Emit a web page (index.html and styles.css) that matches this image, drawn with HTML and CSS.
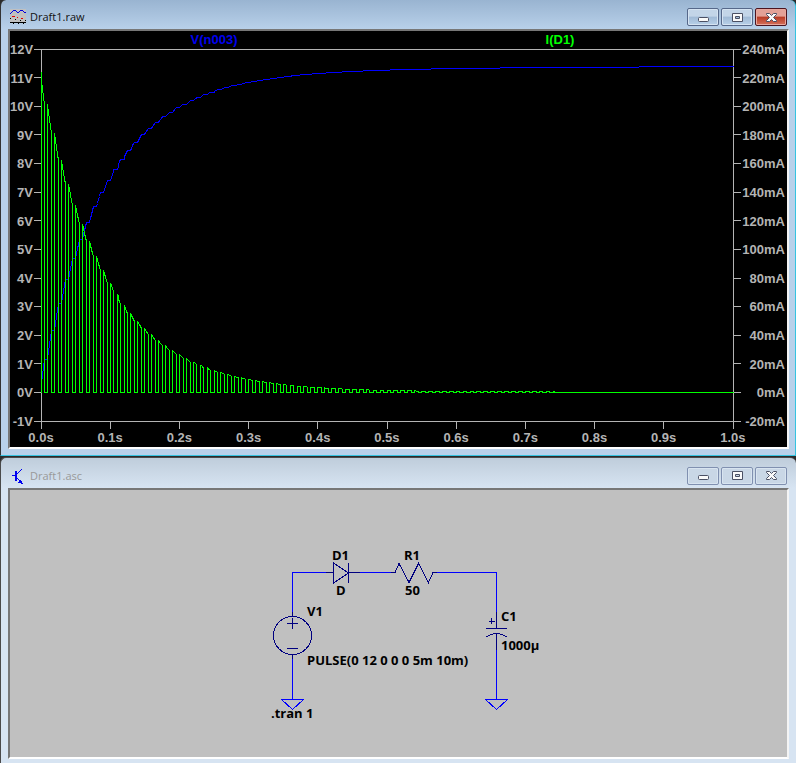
FILE: index.html
```html
<!DOCTYPE html>
<html lang="en">
<head>
<meta charset="utf-8">
<title>Draft1</title>
<link rel="stylesheet" href="styles.css">
</head>
<body>
<section class="window active" aria-label="Draft1.raw">
  <header class="titlebar">
    <svg class="app-icon" viewBox="0 0 16 16" shape-rendering="crispEdges" aria-hidden="true">
      <path fill="#c0c0c0" d="M0 0h16v13H0z"/>
      <path fill="none" stroke="#0000e0" d="M0 4.500h1M1 3.500h1M2 2.500h1M3 1.500h1M4 1.500h2M6 2.500h1M7 3.500h2M9 2.500h1M10 1.500h1M11 1.500h2M13 2.500h1M14 3.500h2"/>
      <path fill="#e00000" d="M2 7h3v1H2zM7 8h1v1H7zM11 9h2v1h-2z"/>
      <path fill="#000" d="M0 13h16v1H0zM0 9h1v1H0zM5 10h1v1H5zM10 11h1v1h-1zM15 11h1v1h-1zM3 14h1v1H3zM8 14h1v1H8zM13 14h1v1h-1z"/>
    </svg>
    <h1>Draft1.raw</h1>
    <div class="controls">
      <button type="button" aria-label="Minimize"><svg viewBox="0 0 13 11"><rect x="1.500" y="5.500" width="10" height="4" rx="1"/></svg></button>
      <button type="button" aria-label="Maximize"><svg viewBox="0 0 13 11"><path fill-rule="evenodd" d="M1.500 1.500h10v8h-10zM4.500 4.500v2h4v-2z"/></svg></button>
      <button type="button" class="close" aria-label="Close"><svg viewBox="0 0 13 11"><path d="M1.500 1.500h3l2 2 2-2h3v1l-3 3 3 3v1h-3l-2-2-2 2h-3v-1l3-3-3-3z"/></svg></button>
    </div>
  </header>
  <div class="pane graph">
    <div class="scale volts" id="volts"></div>
    <div class="legend"><span class="trace-v">V(n003)</span><span class="trace-i">I(D1)</span></div>
    <div class="scale amps" id="amps"></div>
    <svg class="plot" viewBox="0 0 708 380" preserveAspectRatio="none" shape-rendering="crispEdges" role="img" aria-label="Capacitor voltage and diode current over one second">
      <path id="axes" class="axis"/>
      <path id="voltage" class="line-v"/>
      <path id="current" class="line-i"/>
    </svg>
    <div class="seconds" id="seconds"></div>
  </div>
</section>

<section class="window inactive" aria-label="Draft1.asc">
  <header class="titlebar">
    <svg class="app-icon" viewBox="0 0 16 16" shape-rendering="crispEdges" aria-hidden="true">
      <path fill="none" stroke="#0000f0" d="M2 7.500h3M7 5.500h1M8 4.500h1M9 3.500h1M10 2.500h1M11 1.500h1M7 10.500h1M8 11.500h1"/>
      <path fill="#0000f0" d="M5 3h2v10H5zM9 12h2v1h1v2h1v1h-2v-1H8v-1h1z"/>
    </svg>
    <h1>Draft1.asc</h1>
    <div class="controls">
      <button type="button" aria-label="Minimize"><svg viewBox="0 0 13 11"><rect x="1.500" y="5.500" width="10" height="4" rx="1"/></svg></button>
      <button type="button" aria-label="Maximize"><svg viewBox="0 0 13 11"><path fill-rule="evenodd" d="M1.500 1.500h10v8h-10zM4.500 4.500v2h4v-2z"/></svg></button>
      <button type="button" aria-label="Close"><svg viewBox="0 0 13 11"><path d="M1.500 1.500h3l2 2 2-2h3v1l-3 3 3 3v1h-3l-2-2-2 2h-3v-1l3-3-3-3z"/></svg></button>
    </div>
  </header>
  <div class="pane schematic">
    <svg viewBox="254 527 289 193" role="img" aria-label="Pulse source, diode, resistor and capacitor circuit">
      <g class="wire" shape-rendering="crispEdges">
        <path d="M292.500 612V572.500H326M360 572.500h31M433 572.500h63.500V612M292.500 658v41M496.500 650v49"/>
        <path d="M281.500 699.500h22l-11 10zM485.500 699.500h22l-11 10z"/>
      </g>
      <g class="part" shape-rendering="crispEdges">
        <path d="M292.500 612v4M292.500 655v4M292.500 618v11M287 623.500h11M287 648.500h11"/>
        <circle cx="292.500" cy="635.500" r="19"/>
        <path d="M326 572.500h7M333.500 563v20l15-10zM348.500 563v20M348 572.500h12"/>
        <path d="M391 572.500h4l4-9 10 19 9.500-19 10 19 4.500-10h4"/>
        <path d="M496.500 612v16M486 628.500h21M486 637q10.500-7 21 0M496.500 634v16M489 621.500h6M491.500 618v6"/>
      </g>
      <g class="label">
        <text x="332" y="560">D1</text>
        <text x="336" y="595">D</text>
        <text x="404" y="560">R1</text>
        <text x="405" y="595">50</text>
        <text x="307" y="616">V1</text>
        <text x="307" y="665">PULSE(0 12 0 0 0 5m 10m)</text>
        <text x="501" y="621">C1</text>
        <text x="501" y="650">1000µ</text>
        <text x="271" y="718">.tran 1</text>
      </g>
    </svg>
  </div>
</section>
<script src="plot.js"></script>
</body>
</html>
```
FILE: styles.css
```css
* { box-sizing: border-box; }

body {
  margin: 0;
  min-height: 100vh;
  display: flex;
  flex-direction: column;
  background: #2b2b2b;
  font-family: "Open Sans", "Noto Sans", sans-serif;
}

.window {
  display: flex;
  flex-direction: column;
  padding: 0 7px;
}

.active {
  border-left: 1px solid #333;
  border-right: 1px solid #35c3e0;
  border-bottom: 1px solid #35c3e0;
  padding-bottom: 6px;
  padding-right: 6px;
  background: linear-gradient(#99b4d1, #b9d1ea 30px);
  border-radius: 6px 6px 0 0;
}

.inactive {
  flex: 1;
  margin-top: 1px;
  border-left: 1px solid #4a4a4a;
  border-top: 1px solid #4a4a4a;
  padding-bottom: 4px;
  background: linear-gradient(#bfcddb, #d7e4f2 30px);
  border-radius: 6px 6px 0 0;
}

.titlebar {
  display: flex;
  align-items: center;
  height: 29px;
  padding: 5px 2px 0 2px;
}

.inactive .titlebar { height: 30px; }

.app-icon { width: 16px; height: 16px; }

h1 {
  flex: 1;
  margin: 0 0 0 4px;
  font-size: 11px;
  line-height: 16px;
  font-weight: 400;
  color: #111;
}

.inactive h1 { color: #999; }

.controls { display: flex; gap: 2px; }

button {
  display: flex;
  align-items: center;
  justify-content: center;
  width: 32px;
  height: 18px;
  padding: 0;
  border: 1px solid #56688a;
  border-radius: 2px;
  background: linear-gradient(#c3d5e8 45%, #a0bad6 50%, #b8d0e8);
  box-shadow: inset 0 0 0 1px #d5e3f1;
}

button svg {
  width: 13px;
  height: 11px;
  fill: #fafafa;
  stroke: #4b5064;
}

.close {
  border-color: #4c1520;
  background: linear-gradient(#e3a197 45%, #b83a24 50%, #d4705a);
  box-shadow: inset 0 0 0 1px #e8a79d;
}

.inactive button {
  border-color: #8090b0;
  background: #c9d7e6;
  box-shadow: inset 0 0 0 1px #d8e4f0;
}

.pane {
  border: 2px solid;
  border-color: #777 #f4f4f4 #fff #777;
}

.graph {
  display: grid;
  grid-template-columns: 24px 1fr 45px;
  grid-template-rows: 18px 380px 18px;
  background: #000;
  color: #b4b4b4;
  font: bold 13px/18px "Liberation Sans", Arial, sans-serif;
}

.scale {
  grid-row: 1 / -1;
  display: flex;
  flex-direction: column;
  justify-content: space-between;
  height: 390px;
  margin-top: 10px;
  text-align: right;
}

.volts { grid-column: 1; padding-right: 1px; }
.amps { grid-column: 3; padding-right: 2px; }

.legend {
  grid-column: 2;
  display: flex;
  padding: 0 9px 0 7px;
  text-align: center;
}

.legend span { flex: 1; }
.trace-v { color: #0000f0; }
.trace-i { color: #00ff00; }

.plot {
  grid-column: 2;
  grid-row: 2;
  width: 100%;
  height: 380px;
}

.plot path { fill: none; stroke-width: 1; vector-effect: non-scaling-stroke; }
.axis { stroke: #b4b4b4; }
.line-v { stroke: #0000ff; }
.line-i { stroke: #00ff00; }

.seconds {
  grid-column: 2;
  grid-row: 3;
  display: flex;
  justify-content: space-between;
  padding: 0 9px 0 7px;
}

.seconds span {
  display: flex;
  justify-content: center;
  width: 0;
}

.schematic {
  flex: 1;
  display: flex;
  align-items: center;
  justify-content: center;
  background: #c0c0c0;
}

.schematic svg { width: 289px; height: 193px; overflow: visible; }
.wire { fill: none; stroke: #0000ff; }
.part { fill: none; stroke: #000080; }
.label { font: bold 13px "Open Sans", "Noto Sans", sans-serif; }
```
FILE: plot.js
```js
// Plot geometry inside the 708 x 380 view box.
const left = 7, width = 692, height = 372;
const xAt = t => Math.floor(left + t * width) + 0.5;
const yAt = v => Math.floor((12 - v) / 13 * height + 0.1) + 0.5;

function addLabels(id, texts) {
  const box = document.getElementById(id);
  for (const text of texts) {
    const span = document.createElement('span');
    span.textContent = text;
    box.append(span);
  }
}

const rows = Array.from({ length: 14 }, (_, i) => 12 - i);
addLabels('volts', rows.map(v => v + 'V'));
addLabels('amps', rows.map(v => v * 20 + 'mA'));
addLabels('seconds', Array.from({ length: 11 }, (_, i) => (i / 10).toFixed(1) + 's'));

let axes = `M${xAt(0)} 0V372.5M${xAt(1)} 0V380M0 .5H707M0 372.5H707`;
for (const v of rows) axes += `M0 ${yAt(v)}H7M700 ${yAt(v)}H707`;
for (let i = 0; i <= 10; i++) axes += `M${xAt(i / 10)} 372V380`;
document.getElementById('axes').setAttribute('d', axes);

// 12 V pulses, 5 ms on in every 10 ms plus the edges, through a diode and 50 ohm into 1000 uF.
const R = 50, C = 1e-3, thermal = 0.02585, saturation = 1e-14;
function diodeCurrent(vc) {
  let drop = 0.85;
  for (let n = 0; n < 40; n++) {
    const growth = saturation * Math.exp(drop / thermal);
    drop -= (growth - saturation - (12 - vc - drop) / R) / (growth / thermal + 1 / R);
  }
  return (12 - vc - drop) / R;
}

let vc = 0, voltage = `M${xAt(0)} ${yAt(0)}`, current = voltage;
const step = 0.00135;
for (let cycle = 0; cycle < 100; cycle++) {
  const start = cycle * 0.01;
  for (let k = 0; k <= 4; k++) {
    const t = start + k * step, amps = diodeCurrent(vc);
    if (k === 0) current += `L${xAt(t)} ${yAt(0)}`;
    current += `L${xAt(t)} ${yAt(amps * 50)}`;
    voltage += `L${xAt(t)} ${yAt(vc)}`;
    if (k < 4) vc += diodeCurrent(vc + amps * step / C / 2) * step / C;
  }
  current += `L${xAt(start + 4 * step)} ${yAt(0)}`;
  voltage += `L${xAt(start + 0.01)} ${yAt(vc)}`;
}
current += `L${xAt(1)} ${yAt(0)}`;
document.getElementById('voltage').setAttribute('d', voltage);
document.getElementById('current').setAttribute('d', current);
```
